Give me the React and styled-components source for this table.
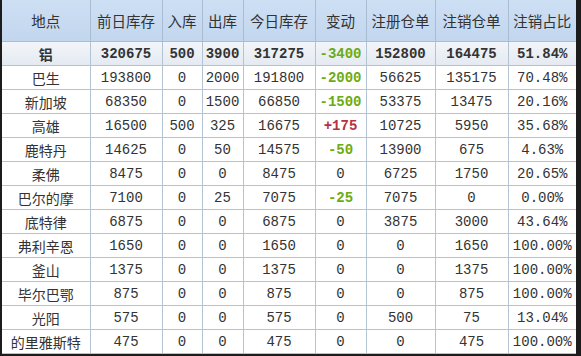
import styled, { createGlobalStyle } from 'styled-components'

const GlobalStyle = createGlobalStyle`
  html, body {
    margin: 0;
    padding: 0;
    background: #1c1c1c;
  }
  body {
    width: 581px;
    height: 356px;
    overflow: hidden;
  }
`

const Frame = styled.div`
  padding: 0 5px 4px 2px;
  width: 574px;
`

const Table = styled.table`
  width: 574px;
  border-collapse: collapse;
  table-layout: fixed;
  background: #fff;
  font-family: 'Liberation Mono', 'Noto Sans CJK SC', monospace;
  font-size: 14px;
  color: #333;
`

const HeadCell = styled.th`
  height: 41px;
  padding: 0;
  background: linear-gradient(#cddff3, #c2d6ee);
  border: 1px solid #a9bdd2;
  border-top: none;
  font-family: 'Noto Sans CJK SC', sans-serif;
  font-weight: normal;
  font-size: 14.5px;
  color: #333;
  text-align: center;
  &:first-child { border-left: none; }
  &:last-child { border-right: none; }
`

const Row = styled.tr`
  height: 24px;
  background: ${(p) => (p.$total ? 'linear-gradient(#f2f5f9, #e4eaf2)' : '#fff')};
`

const Cell = styled.td`
  padding: 0;
  border: 1px solid #b4c3d3;
  text-align: center;
  white-space: nowrap;
  font-weight: ${(p) => (p.$bold ? 'bold' : 'normal')};
  color: ${(p) => (p.$tone === 'down' ? '#6aab16' : p.$tone === 'up' ? '#b8303f' : '#333')};
  &:first-child { border-left: none; }
  &:last-child { border-right: none; }
`

const PlaceCell = styled(Cell)`
  font-family: 'Noto Sans CJK SC', sans-serif;
  font-size: 14px;
`

const headers = ['地点', '前日库存', '入库', '出库', '今日库存', '变动', '注册仓单', '注销仓单', '注销占比']
const widths = [88, 72, 40, 41, 72, 51, 69, 73, 68]

const rows = [
  ['铝', '320675', '500', '3900', '317275', '-3400', '152800', '164475', '51.84%'],
  ['巴生', '193800', '0', '2000', '191800', '-2000', '56625', '135175', '70.48%'],
  ['新加坡', '68350', '0', '1500', '66850', '-1500', '53375', '13475', '20.16%'],
  ['高雄', '16500', '500', '325', '16675', '+175', '10725', '5950', '35.68%'],
  ['鹿特丹', '14625', '0', '50', '14575', '-50', '13900', '675', '4.63%'],
  ['柔佛', '8475', '0', '0', '8475', '0', '6725', '1750', '20.65%'],
  ['巴尔的摩', '7100', '0', '25', '7075', '-25', '7075', '0', '0.00%'],
  ['底特律', '6875', '0', '0', '6875', '0', '3875', '3000', '43.64%'],
  ['弗利辛恩', '1650', '0', '0', '1650', '0', '0', '1650', '100.00%'],
  ['釜山', '1375', '0', '0', '1375', '0', '0', '1375', '100.00%'],
  ['毕尔巴鄂', '875', '0', '0', '875', '0', '0', '875', '100.00%'],
  ['光阳', '575', '0', '0', '575', '0', '500', '75', '13.04%'],
  ['的里雅斯特', '475', '0', '0', '475', '0', '0', '475', '100.00%'],
]

const toneOf = (v) => (v.startsWith('-') ? 'down' : v.startsWith('+') ? 'up' : null)

export default function App() {
  return (
    <Frame>
      <GlobalStyle />
      <Table>
        <colgroup>
          {widths.map((w, i) => (
            <col key={i} style={{ width: w }} />
          ))}
        </colgroup>
        <thead>
          <tr>
            {headers.map((h) => (
              <HeadCell key={h}>{h}</HeadCell>
            ))}
          </tr>
        </thead>
        <tbody>
          {rows.map((r, ri) => {
            const total = ri === 0
            return (
              <Row key={r[0]} $total={total}>
                <PlaceCell $bold={total}>{r[0]}</PlaceCell>
                {r.slice(1).map((v, ci) => {
                  const tone = ci === 4 ? toneOf(v) : null
                  return (
                    <Cell key={ci} $bold={total || !!tone} $tone={tone}>
                      {v}
                    </Cell>
                  )
                })}
              </Row>
            )
          })}
        </tbody>
      </Table>
    </Frame>
  )
}
